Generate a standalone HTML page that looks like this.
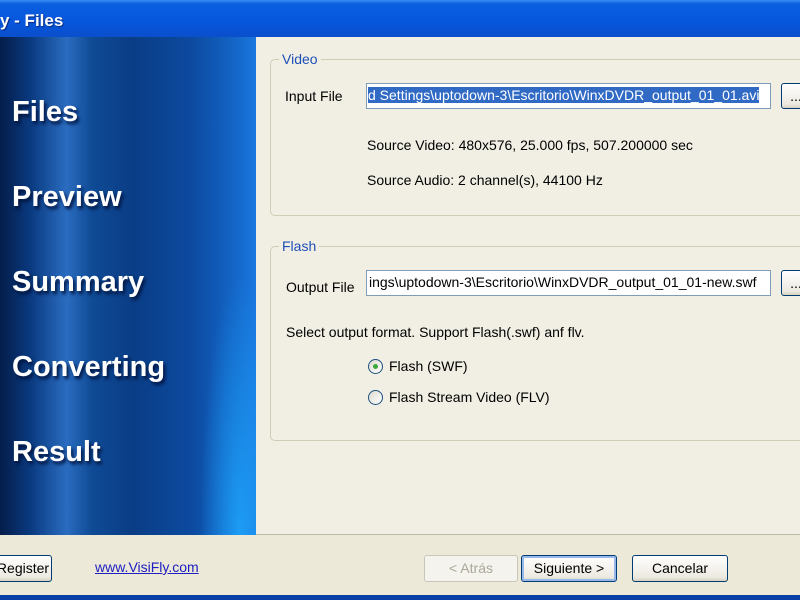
<!DOCTYPE html>
<html><head><meta charset="utf-8"><style>
*{margin:0;padding:0;box-sizing:border-box}
body{width:800px;height:600px;overflow:hidden;background:#ECE9D8;font-family:"Liberation Sans",sans-serif;font-size:14px;color:#000;position:relative}
.title{position:absolute;left:0;top:0;width:800px;height:37px;background:linear-gradient(#3a8cf0 0,#0a5fe0 4px,#0656dc 60%,#0a4fcc 100%);color:#fff;font-weight:bold;font-size:17px;padding:11px 0 0 0;text-shadow:1px 1px 1px #0a2a80}
.left{position:absolute;left:0;top:37px;width:256px;height:498px;background:
radial-gradient(ellipse 40px 260px at 240px 500px,rgba(30,170,255,.8),transparent),
linear-gradient(90deg,#041d4a 0,#0a3a80 12%,#2a6cc0 26%,#0f4a95 36%,#0a3d85 52%,#0c4aa0 75%,#1466c8 92%,#1a78e0 100%)}
.left div{position:absolute;left:12px;color:#fff;font-weight:bold;font-size:29px;text-shadow:2px 3px 3px #021540}
.right{position:absolute;left:256px;top:37px;width:544px;height:498px;background:#F1EFE4;border-bottom:1px solid #bdb9a6}
.grp{position:absolute;left:14px;width:540px;border:1px solid #d0ccb8;border-radius:5px}
.grp .lg{position:absolute;left:8px;top:-9px;background:#F1EFE4;color:#1d4fb8;padding:0 3px;font-size:14px}
.t{position:absolute;font-size:14px;white-space:nowrap}
.inp{position:absolute;height:26px;border:1px solid #7f9db9;background:#fff;overflow:hidden;white-space:nowrap;font-size:14px;padding:3px 2px}
.btn{position:absolute;border:1px solid #003c74;border-radius:3px;background:linear-gradient(#fff,#ece9e0 85%,#d6d0c0);font-size:14px;text-align:center;line-height:24px}
.radio{position:absolute;width:15px;height:15px;border:1px solid #1c5180;border-radius:50%;background:linear-gradient(135deg,#dcdad0,#fff)}
</style></head><body>
<div class="title">y - Files</div>
<div class="left">
<div style="top:59px">Files</div>
<div style="top:144px">Preview</div>
<div style="top:229px">Summary</div>
<div style="top:314px">Converting</div>
<div style="top:399px">Result</div>
</div>
<div class="right">
<div class="grp" style="top:22px;height:157px"><span class="lg">Video</span></div>
<div class="t" style="left:29px;top:51px">Input File</div>
<div class="inp" style="left:110px;top:46px;width:405px;padding:3px 1px"><span style="background:#316ac5;color:#fff">d Settings\uptodown-3\Escritorio\WinxDVDR_output_01_01.avi</span></div>
<div class="btn" style="left:525px;top:46px;width:30px;height:26px">...</div>
<div class="t" style="left:111px;top:100px">Source Video: 480x576, 25.000 fps, 507.200000 sec</div>
<div class="t" style="left:111px;top:135px">Source Audio: 2 channel(s), 44100 Hz</div>
<div class="grp" style="top:209px;height:195px"><span class="lg">Flash</span></div>
<div class="t" style="left:30px;top:242px">Output File</div>
<div class="inp" style="left:110px;top:233px;width:405px">ings\uptodown-3\Escritorio\WinxDVDR_output_01_01-new.swf</div>
<div class="btn" style="left:525px;top:233px;width:30px;height:26px">...</div>
<div class="t" style="left:30px;top:287px">Select output format. Support Flash(.swf) anf flv.</div>
<div class="radio" style="left:112px;top:322px"><div style="position:absolute;left:4px;top:4px;width:5px;height:5px;border-radius:50%;background:#3aa83a"></div></div>
<div class="t" style="left:133px;top:321px">Flash (SWF)</div>
<div class="radio" style="left:112px;top:353px"></div>
<div class="t" style="left:133px;top:352px">Flash Stream Video (FLV)</div>
</div>
<div class="btn" style="left:-14px;top:555px;width:66px;height:27px;padding-left:8px">Register</div>
<div class="t" style="left:95px;top:559px;color:#2020c0;text-decoration:underline">www.VisiFly.com</div>
<div class="btn" style="left:424px;top:555px;width:94px;height:27px;border-color:#c9c7ba;color:#aca899;background:#f4f3ee">&lt; Atrás</div>
<div class="btn" style="left:521px;top:555px;width:96px;height:27px;box-shadow:inset 0 0 0 2px #98b8ea">Siguiente &gt;</div>
<div class="btn" style="left:632px;top:555px;width:96px;height:27px">Cancelar</div>
<div style="position:absolute;left:0;top:595px;width:800px;height:5px;background:#0a3fa8"></div>
</body></html>
